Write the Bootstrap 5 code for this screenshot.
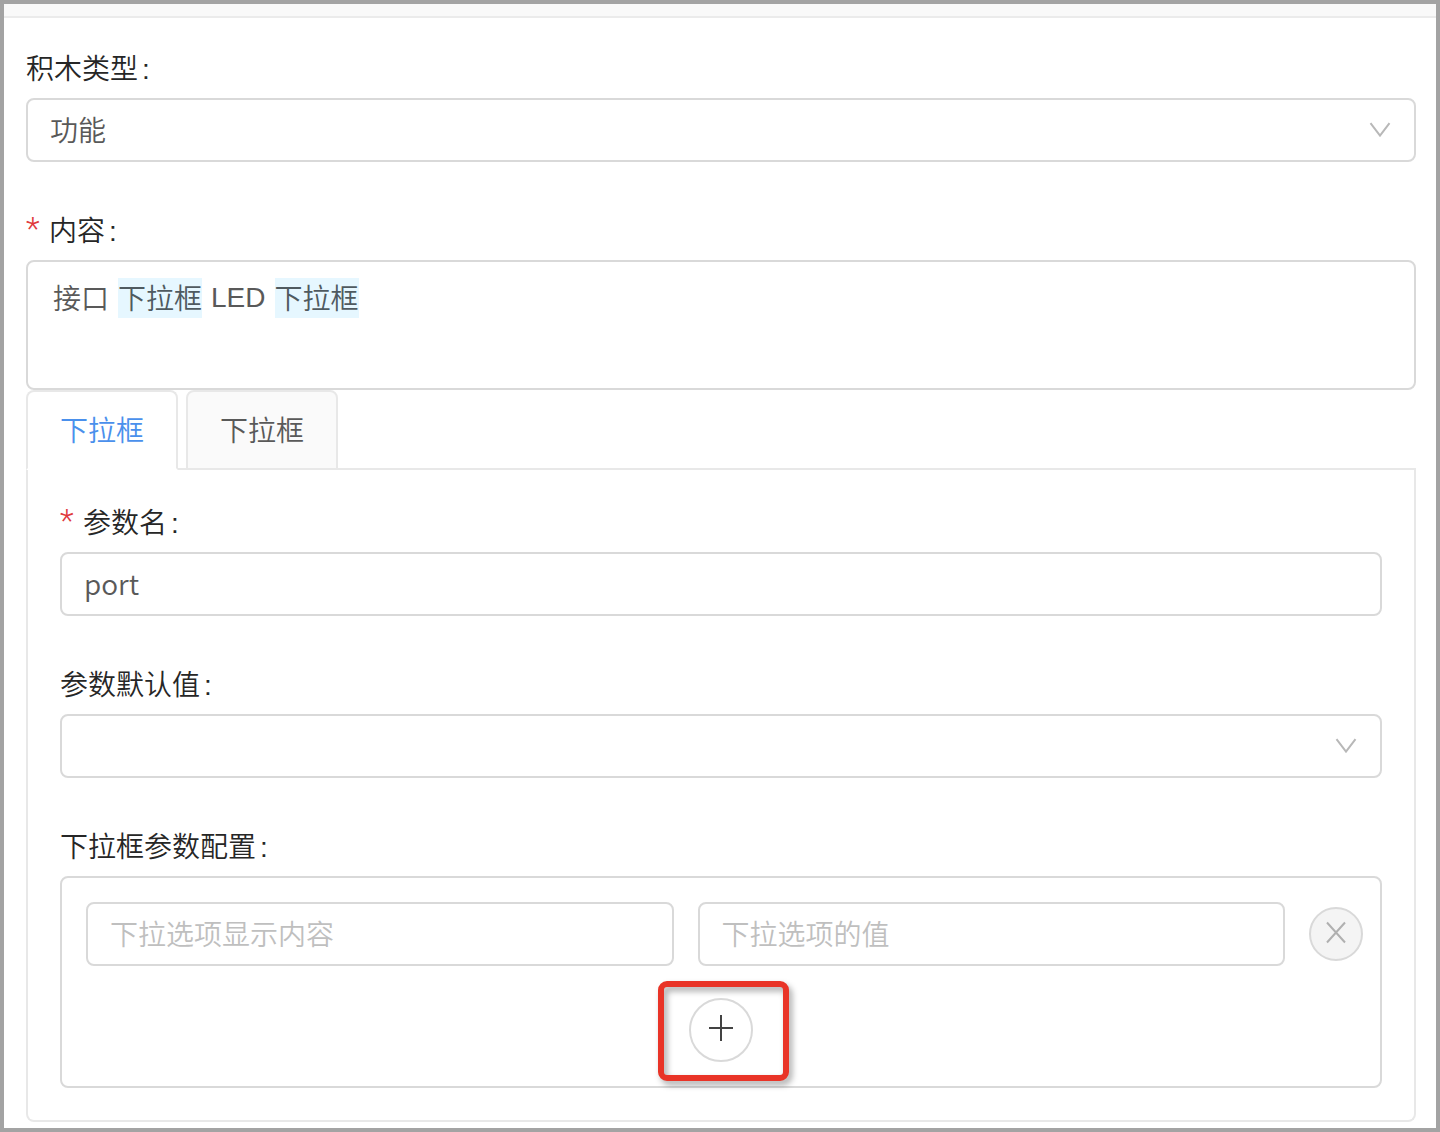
<!DOCTYPE html>
<html lang="zh-CN">
<head>
<meta charset="utf-8">
<meta name="viewport" content="width=device-width, initial-scale=1">
<title>积木配置</title>
<link href="https://cdn.jsdelivr.net/npm/bootstrap@5.3.0/dist/css/bootstrap.min.css" rel="stylesheet">
<style>
:root { --line: #d9d9d9; --line-soft: #e8e8e8; --ink: #262626; --ink-2: #595959; }
body {
  font-family: "Noto Sans CJK SC", "Liberation Sans", sans-serif;
  font-size: 28px; line-height: 40px; font-weight: 350;
  color: var(--ink-2); background: #fff;
}
.panel-frame { border: 4px solid #a3a3a3; }
.top-strip { height: 14px; background: #f9f9f9; border-bottom: 2px solid #ebebeb; }
.block-form { padding: 30px 20px 6px 22px; }
.field { margin-bottom: 48px; }
.field-label { display: block; height: 40px; line-height: 38px; margin-bottom: 10px; color: var(--ink); }
.colon { font-family: "Liberation Sans", sans-serif; line-height: 1; margin-left: 4px; }
.star { display: inline-block; width: 15px; margin-right: 8px; font-family: Roboto, sans-serif; font-size: 32px; font-weight: 300; line-height: 28px; vertical-align: 2px; color: #e0383c; }
.form-control, .form-select {
  height: 64px; padding: 0 22px 2px; border: 2px solid var(--line); border-radius: 8px;
  font-size: 28px; line-height: 40px; font-weight: 350; color: var(--ink-2); background-color: #fff;
}
.form-select {
  background-image: url("data:image/svg+xml,%3Csvg xmlns='http://www.w3.org/2000/svg' viewBox='0 0 22 16'%3E%3Cpath d='M1.5 1.2L11 13.6L20.5 1.2' fill='none' stroke='%23b8b8b8' stroke-width='2'/%3E%3C/svg%3E");
  background-size: 22px 16px; background-position: right 23px center;
}
.form-control::placeholder { color: #bfbfbf; opacity: 1; }
.editor { height: 130px; padding: 16px 25px; gap: 9px; }
.editor span { height: 40px; line-height: 38px; }
.editor .latin { font-family: "Liberation Sans", sans-serif; line-height: 40px; }
.mention { background: #e6f7ff; color: #4f5a60; }
.nav-tabs { --bs-nav-tabs-border-width: 2px; --bs-nav-tabs-border-color: #e8e8e8; gap: 8px; }
.nav-tabs .nav-link {
  height: 80px; padding: 0 32px 2px; border: 2px solid var(--line-soft); border-radius: 8px 8px 0 0;
  background: #fafafa; color: var(--ink-2); font-weight: 350;
}
.nav-tabs .nav-link.active { background: #fff; color: #4a90ec; border-color: var(--line-soft) var(--line-soft) #fff; }
.tab-body { padding: 32px; border: 2px solid var(--line-soft); border-top: 0; border-radius: 0 0 8px 8px; }
.options-box { padding: 24px; border: 2px solid var(--line); border-radius: 8px; }
.option-row { gap: 24px; margin: 0 -7px 32px 0; }
.option-row .form-control { flex: 1 1 0; min-width: 0; }
.round-btn { border: 2px solid var(--line); border-radius: 50%; padding: 0; background: #fff; display: block; }
.round-btn svg { display: block; margin: auto; }
.remove-btn { width: 54px; height: 54px; background: #f4f4f4; flex: none; }
.add-btn { width: 64px; height: 64px; }
.callout-ring {
  inset: -17px -36px -19px -31px; border: 6px solid #e93427; border-radius: 9px; pointer-events: none;
  filter: drop-shadow(3px 4px 3px rgba(0, 0, 0, .35));
}
</style>
</head>
<body>
<main class="panel-frame min-vh-100">
  <div class="top-strip"></div>
  <form class="block-form">
    <div class="field">
      <label class="field-label" for="kind">积木类型<span class="colon">:</span></label>
      <select class="form-select" id="kind"><option>功能</option></select>
    </div>

    <div>
      <div class="field-label" id="contentLabel"><span class="star">*</span>内容<span class="colon">:</span></div>
      <div class="form-control editor d-flex align-items-start" role="textbox" aria-multiline="true" aria-labelledby="contentLabel" contenteditable="true" spellcheck="false"><span>接口</span><span class="mention">下拉框</span><span class="latin">LED</span><span class="mention">下拉框</span></div>
    </div>

    <div class="nav nav-tabs" role="tablist">
      <button class="nav-link active" type="button" role="tab" id="tab1" aria-selected="true" aria-controls="pane1">下拉框</button>
      <button class="nav-link" type="button" role="tab" id="tab2" aria-selected="false">下拉框</button>
    </div>
    <section class="tab-body" id="pane1" role="tabpanel" aria-labelledby="tab1">
      <div class="field">
        <label class="field-label" for="pname"><span class="star">*</span>参数名<span class="colon">:</span></label>
        <input class="form-control" id="pname" type="text" value="port">
      </div>
      <div class="field">
        <label class="field-label" for="pdefault">参数默认值<span class="colon">:</span></label>
        <select class="form-select" id="pdefault"><option></option></select>
      </div>
      <div role="group" aria-labelledby="optLabel">
        <div class="field-label" id="optLabel">下拉框参数配置<span class="colon">:</span></div>
        <div class="options-box">
          <div class="option-row d-flex align-items-center">
            <input class="form-control" type="text" placeholder="下拉选项显示内容" aria-label="下拉选项显示内容">
            <input class="form-control" type="text" placeholder="下拉选项的值" aria-label="下拉选项的值">
            <button class="round-btn remove-btn" type="button" aria-label="删除">
              <svg width="22" height="26" viewBox="0 0 22 26" fill="none" stroke="#b0b0b0" stroke-width="2"><path d="M2 1.5L20 21.5M20 1.5L2 21.5"/></svg>
            </button>
          </div>
          <div class="d-flex justify-content-center">
            <div class="position-relative">
              <button class="round-btn add-btn" type="button" aria-label="添加">
                <svg width="26" height="30" viewBox="0 0 26 30" fill="none" stroke="#434343" stroke-width="2"><path d="M13 0V26M1 13H25"/></svg>
              </button>
              <span class="callout-ring position-absolute"></span>
            </div>
          </div>
        </div>
      </div>
    </section>
  </form>
</main>
<script src="https://cdn.jsdelivr.net/npm/bootstrap@5.3.0/dist/js/bootstrap.bundle.min.js"></script>
</body>
</html>
